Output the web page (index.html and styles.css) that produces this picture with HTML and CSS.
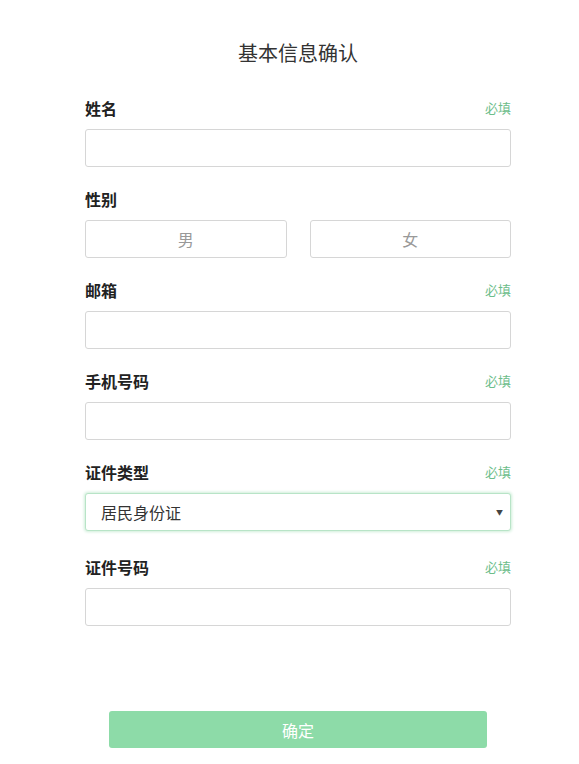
FILE: index.html
```html
<!DOCTYPE html>
<html lang="zh-CN">
<head>
<meta charset="utf-8">
<title>基本信息确认</title>
<link rel="stylesheet" href="styles.css">
</head>
<body>
<div class="page">
  <h1 class="title">基本信息确认</h1>
  <form class="form">
    <div class="field">
      <div class="label-row"><span class="label">姓名</span><span class="req">必填</span></div>
      <input class="input" type="text">
    </div>
    <div class="field">
      <div class="label-row"><span class="label">性别</span></div>
      <div class="gender">
        <button type="button" class="gbtn">男</button>
        <button type="button" class="gbtn">女</button>
      </div>
    </div>
    <div class="field">
      <div class="label-row"><span class="label">邮箱</span><span class="req">必填</span></div>
      <input class="input" type="text">
    </div>
    <div class="field">
      <div class="label-row"><span class="label">手机号码</span><span class="req">必填</span></div>
      <input class="input" type="text">
    </div>
    <div class="field field-select">
      <div class="label-row"><span class="label">证件类型</span><span class="req">必填</span></div>
      <div class="select-wrap">
        <select class="select"><option>居民身份证</option></select>
        <span class="arrow">▼</span>
      </div>
    </div>
    <div class="field">
      <div class="label-row"><span class="label">证件号码</span><span class="req">必填</span></div>
      <input class="input" type="text">
    </div>
    <div class="actions">
      <button type="button" class="submit">确定</button>
    </div>
  </form>
</div>
</body>
</html>
```

FILE: styles.css
```css
* { box-sizing: border-box; }
html, body { margin: 0; padding: 0; background: #fff; }
body {
  font-family: "Noto Sans CJK SC", "Noto Sans", "Liberation Sans", sans-serif;
  color: #222;
  padding-left: 17px;
}
.page {
  width: 426px;
  margin: 0 auto;
  padding-top: 39px;
}
.title {
  margin: 0;
  font-size: 20px;
  font-weight: 400;
  line-height: 28px;
  text-align: center;
  color: #333;
}
.form {
  margin-top: 29px;
  display: flex;
  flex-direction: column;
}
.field {
  display: flex;
  flex-direction: column;
  margin-bottom: 20px;
}
.field-select { margin-bottom: 24px; }
.label-row {
  display: flex;
  justify-content: space-between;
  align-items: center;
  height: 24px;
  margin-bottom: 9px;
}
.label {
  font-size: 16px;
  font-weight: 700;
  color: #222;
  line-height: 24px;
}
.req {
  font-size: 13px;
  color: #6dbd8a;
  line-height: 20px;
}
.input {
  display: block;
  width: 100%;
  height: 38px;
  border: 1px solid #d6d6d6;
  border-radius: 3px;
  background: #fff;
  outline: none;
  font: inherit;
}
.gender {
  display: flex;
  gap: 23px;
}
.gbtn {
  flex: 1;
  height: 38px;
  border: 1px solid #d6d6d6;
  border-radius: 3px;
  background: #fff;
  color: #999;
  font-family: inherit;
  font-size: 16px;
}
.select-wrap {
  position: relative;
}
.select {
  display: block;
  width: 100%;
  height: 38px;
  -webkit-appearance: none;
  appearance: none;
  border: 1px solid #b8e4c7;
  border-radius: 3px;
  box-shadow: 0 0 3px 1px #cfeed9;
  background: #fff;
  padding: 0 0 0 15px;
  font-family: inherit;
  font-size: 16px;
  color: #333;
  outline: none;
}
.arrow {
  position: absolute;
  right: 8px;
  top: 50%;
  transform: translateY(-50%);
  font-size: 7px;
  color: #444;
  pointer-events: none;
}
.actions {
  display: flex;
  justify-content: center;
  margin-top: 65px;
}
.submit {
  width: 378px;
  height: 37px;
  border: none;
  border-radius: 3px;
  background: #8ddba8;
  color: #fff;
  font-family: inherit;
  font-size: 16px;
}
```
